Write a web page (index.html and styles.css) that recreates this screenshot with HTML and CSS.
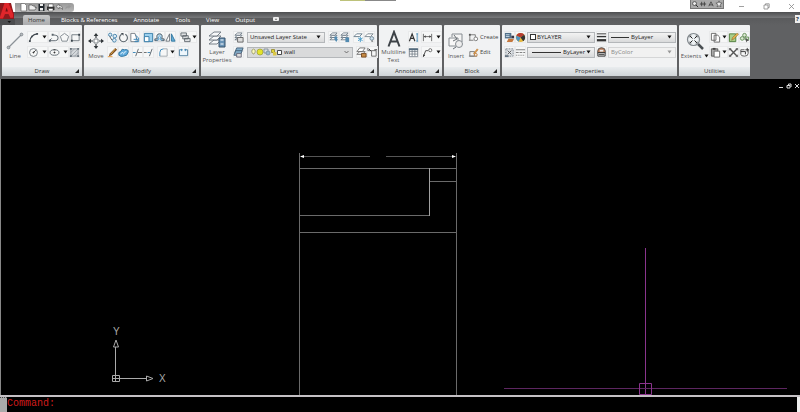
FILE: index.html
```html
<!DOCTYPE html>
<html lang="en">
<head>
<meta charset="utf-8">
<title>Drawing editor</title>
<link rel="stylesheet" href="styles.css">
</head>
<body>
<svg class="defs" aria-hidden="true">
  <symbol id="caret" viewBox="0 0 5 4"><path d="M0.5 0.5h4L2.5 3.5z" fill="#111"/></symbol>
  <symbol id="corner" viewBox="0 0 4 4"><path d="M4 0v4H0z" fill="#222"/></symbol>
  <symbol id="layers" viewBox="0 0 12 12"><g fill="#f8f9fa" stroke="#556472" stroke-width=".8"><path d="M2 8.500l3-2.500h5L7.500 8.500z"/><path d="M2 6l3-2.500h5L7.500 6z"/><path d="M2 3.500L5 1h5L7.500 3.500z"/></g></symbol>
</svg>
<header class="titlebar">
  <button class="app" aria-label="Application menu"><svg viewBox="0 0 15 22"><path d="M0 0h11l3 12v4H0z" fill="#8d1a1e"/><path d="M0 14L4.500 0H9l4.500 11v3.500l-3 .5L8.500 11H5l-2 4.500H0z" fill="#e0262b"/><path d="M6.600 4.500L5.400 8.500h2.500z" fill="#6d1216"/><path d="M9 0l4.500 11v3.500" stroke="#a81419" fill="none"/><path d="M0 16h15v6H0z" fill="#4c4d4f"/><path d="M7.500 18h3.500L9.200 20z" fill="#111"/></svg></button>
  <nav class="quick" aria-label="Quick access">
    <button aria-label="New"><svg viewBox="0 0 9 9"><path d="M2 .500h3.500l2 2v5.500H2z" fill="#fff" stroke="#555" stroke-width=".6"/></svg></button>
    <button aria-label="Open"><svg viewBox="0 0 9 9"><path d="M1 7V2h3l1 1h2v1.500h1.500L7 7z" fill="#eee" stroke="#555" stroke-width=".7"/></svg></button>
    <button aria-label="Save"><svg viewBox="0 0 9 9"><path d="M1.500 1h6v7h-6z" fill="#20262b"/><path d="M3 1h3v2H3zM3 5h3v2.500H3z" fill="#eee"/></svg></button>
    <button aria-label="Print"><svg viewBox="0 0 9 9"><path d="M1 3.500h7.500V7H1z" fill="#333"/><path d="M2.500 1H7v3H2.500zM2.500 5.500H7V8H2.500z" fill="#fff" stroke="#333" stroke-width=".5"/></svg></button>
    <button aria-label="Undo"><svg viewBox="0 0 9 9"><path d="M1 3.500L4 1v1.500q4 0 3.500 4Q6.500 4.500 4 4.500V6z" fill="#ddd" stroke="#555" stroke-width=".6"/></svg></button>
    <button aria-label="Redo"><svg viewBox="0 0 9 9"><path d="M7 3.500L4.500 1.500V3Q1 3 1.500 6.500 2.500 4.500 4.500 4.500v1z" fill="#999"/></svg></button>
  </nav>
  <div class="edge"><i></i><i></i></div>
  <nav class="info" aria-label="Information">
    <button aria-label="Search"><svg viewBox="0 0 9 9"><circle cx="4" cy="4" r="2.200" fill="#eee" stroke="#333" stroke-width=".8"/><path d="M5.500 5.500l2.500 2.500" stroke="#222"/></svg></button>
    <button aria-label="Key"><svg viewBox="0 0 9 9"><path d="M1 4.500h7M3 2v5M6 2v5" stroke="#333" stroke-width=".9"/></svg></button>
    <button aria-label="Communication"><svg viewBox="0 0 9 9"><path d="M2 7l2.500-5L7 7M2.500 5.500h4" stroke="#333" fill="none" stroke-width=".8"/></svg></button>
    <button aria-label="Favourites"><svg viewBox="0 0 9 9"><path d="M4.500 1l1 2.300 2.500.2-2 1.700.7 2.600-2.200-1.500-2.200 1.500.7-2.600-2-1.700 2.500-.2z" fill="#eee" stroke="#333" stroke-width=".6"/></svg></button>
  </nav>
  <div class="window">
    <button aria-label="Minimize"><svg viewBox="0 0 7 7"><path d="M1 3.500h5"/></svg></button>
    <button aria-label="Restore"><svg viewBox="0 0 7 7"><path d="M1 2h4v4H1zM2.500 2V.800h3.700v3.700H5"/></svg></button>
    <button aria-label="Close"><svg viewBox="0 0 7 7"><path d="M1 1l5 5M6 1L1 6"/></svg></button>
  </div>
</header>
<nav class="tabs" aria-label="Ribbon">
  <button class="tab active">Home</button>
  <button class="tab">Blocks &amp; References</button>
  <button class="tab">Annotate</button>
  <button class="tab">Tools</button>
  <button class="tab">View</button>
  <button class="tab">Output</button>
  <button class="toggle" aria-label="Minimize ribbon"><svg viewBox="0 0 6 4"><rect width="6" height="4" rx="1" fill="#eee"/><path d="M2 2.700h2L3 1.200z" fill="#444"/></svg></button>
  <button class="help" aria-label="Help">?</button>
</nav>
<div class="ribbon">
  <section class="panel draw">
    <div class="body">
      <button class="big"><svg viewBox="0 0 18 18"><path d="M2.500 15.500l13-13" stroke="#8b9298" stroke-width="1.200"/><g fill="#b8bdc1" stroke="#737a80" stroke-width=".7"><circle cx="2.500" cy="15.500" r="1.400"/><circle cx="15.500" cy="2.500" r="1.400"/></g></svg><span>Line</span></button>
      <div class="rows">
        <div class="row">
          <button class="tool drop" aria-label="Arc"><svg viewBox="0 0 12 12"><path d="M2 10Q3 3 10 2" fill="none" stroke="#414950" stroke-width="1.200"/><path d="M1 9h2v2H1zM9 1h2v2H9zM3.500 4h1.600v1.600H3.500z" fill="#414950"/></svg><svg class="caret"><use href="#caret"/></svg></button>
          <button class="tool" aria-label="Polyline"><svg viewBox="0 0 12 12"><path d="M1.500 9.500h6.500a2.500 2.500 0 000-6L5 3M1.500 9.500L4 7" fill="none" stroke="#59636b"/><path d="M1 8.500h2v2H1zM4 2h2v2H4z" fill="#59636b"/></svg></button>
          <button class="tool" aria-label="Polygon"><svg viewBox="0 0 12 12"><path d="M6 1.500l4.500 3.300-1.700 5.200H3.200L1.500 4.800z" fill="none" stroke="#7f878d"/></svg></button>
          <button class="tool" aria-label="Rectangle"><svg viewBox="0 0 12 12"><path d="M2 3h8v6.500H2z" fill="none" stroke="#6e777e"/><path d="M9 2h2v2H9zM1 8.500h2v2H1z" fill="#38434b"/></svg></button>
        </div>
        <div class="row">
          <button class="tool drop" aria-label="Circle"><svg viewBox="0 0 12 12"><circle cx="6" cy="6" r="4.300" fill="none" stroke="#727a80"/><path d="M6 6l2.500-2.500M5 6h2M6 5v2" stroke="#333"/></svg><svg class="caret"><use href="#caret"/></svg></button>
          <button class="tool drop" aria-label="Ellipse"><svg viewBox="0 0 12 12"><ellipse cx="6" cy="6" rx="4.800" ry="3" fill="none" stroke="#59636b"/><path d="M5 6h2M6 5v2M5 3h2" stroke="#333"/></svg><svg class="caret"><use href="#caret"/></svg></button>
          <button class="tool" aria-label="Hatch"><svg viewBox="0 0 12 12"><path d="M2 2h8v8H2z" fill="#d5d9dc" stroke="#8b9299"/><path d="M2 6l4-4M2 10l8-8M6 10l4-4" stroke="#7c858d" stroke-width=".6"/><path d="M1 1h2v2H1zM9 1h2v2H9zM1 9h2v2H1zM9 9h2v2H9z" fill="#68717a"/></svg></button>
        </div>
      </div>
    </div>
    <h2>Draw<svg><use href="#corner"/></svg></h2>
  </section>
  <section class="panel modify">
    <div class="body">
      <button class="big"><svg viewBox="0 0 18 18"><path d="M9 2v4M9 12v4M2 9h4M12 9h4" stroke="#33383c" stroke-width="1.200"/><path d="M9 1l2.300 3H6.700zM9 17l2.300-3H6.700zM1 9l3-2.300v4.600zM17 9l-3-2.300v4.600z" fill="#33383c"/><path d="M7 7h4v4H7z" fill="#fff" stroke="#7e8488"/></svg><span>Move</span></button>
      <div class="rows">
        <div class="row">
          <button class="tool" aria-label="Copy"><svg viewBox="0 0 12 12"><g fill="#dcebf5" stroke="#4280a8"><circle cx="3.500" cy="3" r="1.800"/><circle cx="8.500" cy="4.500" r="2"/><circle cx="8" cy="9" r="2"/></g><path d="M3 5l2.500 4" stroke="#555"/></svg></button>
          <button class="tool" aria-label="Rotate"><svg viewBox="0 0 12 12"><path d="M4 2.500a4.300 4.300 0 104 0" fill="none" stroke="#59636b" stroke-width="1.200"/><path d="M3 1h3v3z" fill="#414950"/></svg></button>
          <button class="tool" aria-label="Stretch"><svg viewBox="0 0 12 12"><path d="M2 10.500V1.500h4.500l3 9z" fill="#fff" stroke="#737b82"/><path d="M7 3.500l3.500 3v4H6M5 8h4M7.500 6.500L9 8 7.500 9.500" fill="none" stroke="#3483b7"/></svg></button>
          <button class="tool sep" aria-label="Scale"><svg viewBox="0 0 12 12"><path d="M1.500 1.500h9v9h-9z" fill="#9bd0ee" stroke="#347ba7"/><path d="M1.500 5h5v5.500h-5z" fill="#fff" stroke="#347ba7"/></svg></button>
          <button class="tool" aria-label="Offset"><svg viewBox="0 0 12 12"><path d="M1 9.500h10V7.500H8.500Q10 2 6 2T3.500 7.500H1z" fill="#b9dcf0" stroke="#44535f"/><path d="M4 9.500V8h1.500Q4 4.500 6 4.500T6.500 8H8v1.500" fill="#fff" stroke="#3b89bc" stroke-width=".8"/></svg></button>
          <button class="tool" aria-label="Mirror"><svg viewBox="0 0 12 12"><path d="M5 2v8H1z" fill="#fff" stroke="#6b737a"/><path d="M7 2v8h4z" fill="#66acd7" stroke="#2f769f"/></svg></button>
          <button class="tool drop sep" aria-label="Array"><svg viewBox="0 0 12 12"><g fill="#e0e2e4" stroke="#555d64" stroke-width=".9"><path d="M1 1h6v3.500H1zM3 4h6v3.500H3zM5 7h6v3.500H5z"/></g></svg><svg class="caret"><use href="#caret"/></svg></button>
        </div>
        <div class="row">
          <button class="tool" aria-label="Erase"><svg viewBox="0 0 12 12"><path d="M2 10l1-3 6-6 2 2-6 6z" fill="#7a4d22"/><path d="M4 8l5-6" stroke="#e8b652"/><path d="M1 10.500h5" stroke="#e79838"/></svg></button>
          <button class="tool" aria-label="Explode"><svg viewBox="0 0 12 12"><path d="M1 9Q0 5 3 5 4 1 7 3q5-1 4 3-1 4-5 4Q3 11 1 9z" fill="#5da9db" stroke="#34759e"/><path d="M3 8q0-2 2.500-2M6 8q0-3 3-3" fill="none" stroke="#e9f5fc"/></svg></button>
          <button class="tool sep" aria-label="Trim"><svg viewBox="0 0 12 12"><path d="M1 6h3" stroke="#3483b7"/><path d="M6 6h5" stroke="#666"/><path d="M4 10l3-8" stroke="#59636b"/></svg></button>
          <button class="tool" aria-label="Extend"><svg viewBox="0 0 12 12"><path d="M1 6h3" stroke="#666"/><path d="M5 6h3" stroke="#3483b7"/><path d="M7 10l3-8" stroke="#59636b"/></svg></button>
          <button class="tool drop sep" aria-label="Fillet"><svg viewBox="0 0 12 12"><path d="M2 10V6q0-4 4-4" fill="none" stroke="#3483b7"/><path d="M6 2h4v8H2" fill="none" stroke="#89939a" stroke-width=".8"/></svg><svg class="caret"><use href="#caret"/></svg></button>
          <button class="tool sep" aria-label="Break"><svg viewBox="0 0 12 12"><path d="M5 3H1.500v6.500h9V3H7" fill="#edf6fc" stroke="#497a9a"/><path d="M4 2v2.500M8 2v2.500" stroke="#3483b7"/></svg></button>
        </div>
      </div>
    </div>
    <h2>Modify<svg><use href="#corner"/></svg></h2>
  </section>
  <section class="panel layers">
    <div class="body">
      <button class="big two"><svg viewBox="0 0 18 18"><g fill="#f7f8f9" stroke="#6b757e" stroke-width=".9"><path d="M1 14l5-4h7l-4 4z"/><path d="M1 10l5-4h7l-4 4z"/><path d="M1 6l5-4h7L9 6z"/></g><path d="M11 8h6v9h-6z" fill="#6993b6" stroke="#38536a"/><path d="M12.500 10h3M12.500 14h3" stroke="#fff"/></svg><span>Layer<br>Properties</span></button>
      <div class="rows">
        <div class="row">
          <button class="tool" aria-label="Layer states"><svg viewBox="0 0 12 12"><use href="#layers"/><path d="M5 6h6v5H5z" fill="#ddd" stroke="#666"/></svg></button>
          <div class="combo state"><select aria-label="Layer state"><option>Unsaved Layer State</option></select><svg class="caret"><use href="#caret"/></svg></div>
          <button class="tool" aria-label="Make current"><svg viewBox="0 0 12 12"><use href="#layers"/><path d="M7 5h3v3h1L9 11 7 8z" fill="#528bb1"/></svg></button>
          <button class="tool" aria-label="Previous layer"><svg viewBox="0 0 12 12"><use href="#layers"/><path d="M7 6h4v5H7z" fill="#528bb1"/></svg></button>
          <button class="tool sep" aria-label="Freeze"><svg viewBox="0 0 12 12"><path d="M1 5l3-3h6L7 5z" fill="#fff" stroke="#687d8b"/><path d="M8 5v6M5.500 6.500l5 3M10.500 6.500l-5 3" stroke="#4499c8"/></svg></button>
          <button class="tool" aria-label="Layer off"><svg viewBox="0 0 12 12"><path d="M1 5l3-3h6L7 5z" fill="#fff" stroke="#7d8890"/><circle cx="8.500" cy="7" r="2" fill="#cfe2ef" stroke="#718795"/><path d="M8 10h2" stroke="#555"/></svg></button>
        </div>
        <div class="row">
          <button class="tool" aria-label="Isolate"><svg viewBox="0 0 12 12"><g fill="#84aeca" stroke="#466178"><path d="M4 1h7L9 6H2z"/><path d="M3 4h7L8 9H1z"/></g><path d="M4 7h5v4H4z" fill="#ddd" stroke="#667"/></svg></button>
          <div class="combo current"><svg class="states" viewBox="0 0 32 10"><path d="M3 7Q1 5 2 3q2-2 3 0 1 2-1 4z" fill="#fbf9bd" stroke="#8c8e58" stroke-width=".7"/><circle cx="10" cy="5" r="3" fill="#e4e42b" stroke="#999b31" stroke-width=".7"/><path d="M14 2h4v4h-4z" fill="#d4dce1" stroke="#71808a" stroke-width=".7"/><circle cx="18" cy="6" r="2" fill="#9bbacf" stroke="#718795" stroke-width=".7"/><path d="M21.500 2.500h3v3h-3z" fill="#e1d53b" stroke="#867b1b" stroke-width=".7"/><path d="M23 5h3.500v3.500H23z" fill="#dbc748"/><path d="M27.500 3.500h4v4h-4z" fill="#fff" stroke="#222" stroke-width=".8"/></svg><select aria-label="Layer"><option>wall</option></select><svg class="caret" viewBox="0 0 5 4"><path d="M.500 1l2 2 2-2" stroke="#555" fill="none" stroke-width=".8"/></svg></div>
          <button class="tool" aria-label="Lock"><svg viewBox="0 0 12 12"><path d="M1 5l3-4h6L7 5zM1 8l3-3h6L7 8z" fill="#fff" stroke="#6c6c6c"/><path d="M6 7h5v4H6z" fill="#c58a44" stroke="#774820"/></svg></button>
          <button class="tool" aria-label="Match layer"><svg viewBox="0 0 12 12"><path d="M1 1v3h3M4 4h6v6H5V5" fill="none" stroke="#666"/><path d="M2 2l3 3M8 3h3" stroke="#333"/></svg></button>
        </div>
      </div>
    </div>
    <h2>Layers<svg><use href="#corner"/></svg></h2>
  </section>
  <section class="panel annotation">
    <div class="body">
      <button class="big two"><svg viewBox="0 0 18 18"><path d="M3.500 16.500L9 2l5.500 14.500M5.500 11.500h7" fill="none" stroke="#3d4247" stroke-width="2"/></svg><span>Multiline<br>Text</span></button>
      <div class="rows">
        <div class="row">
          <button class="tool" aria-label="Single line text"><svg viewBox="0 0 12 12"><path d="M1.500 10l3-8 3 8M2.500 7h4" fill="none" stroke="#333" stroke-width="1.300"/><path d="M9 2h2M10 2v8M9 10h2" stroke="#4689b4"/></svg></button>
          <button class="tool drop" aria-label="Dimension"><svg viewBox="0 0 12 12"><path d="M1.500 2v8M10.500 2v8M2 5h8" stroke="#666"/><path d="M2 5l2-1.500v3zM10 5L8 3.500v3z" fill="#444"/></svg><svg class="caret"><use href="#caret"/></svg></button>
        </div>
        <div class="row">
          <button class="tool" aria-label="Table"><svg viewBox="0 0 12 12"><path d="M1.500 2h9v8.500h-9zM1.500 5h9M1.500 7.700h9M4.500 3v7M7.500 3v7" fill="#fff" stroke="#65717b" stroke-width=".8"/><path d="M1 1.500h10v2H1z" fill="#536a7d"/></svg></button>
          <button class="tool drop" aria-label="Leader"><svg viewBox="0 0 12 12"><path d="M1.500 10.500L4 4h3" fill="none" stroke="#444"/><path d="M1 11l.5-3 2 1z" fill="#333"/><circle cx="9" cy="3.500" r="1.700" fill="#fff" stroke="#666"/></svg><svg class="caret"><use href="#caret"/></svg></button>
        </div>
      </div>
    </div>
    <h2>Annotation<svg><use href="#corner"/></svg></h2>
  </section>
  <section class="panel block">
    <div class="body">
      <button class="big"><svg viewBox="0 0 18 18"><path d="M5 5V2h10v8h-2" fill="#f4f4f4" stroke="#868c91"/><path d="M2 6h9v8H2z" fill="#f8f8f8" stroke="#868c91"/><circle cx="12" cy="12" r="3.500" fill="#eee" stroke="#868c91"/><path d="M7 3l3 4-4 2M9 15l-3 2" fill="none" stroke="#686e73"/></svg><span>Insert</span></button>
      <div class="rows">
        <div class="row"><button class="tool text"><svg viewBox="0 0 12 12"><path d="M2 9V3h6v3M1 9h5" fill="none" stroke="#777"/><circle cx="8.500" cy="7.500" r="2" fill="#fff" stroke="#777"/><path d="M1 2h2v2H1z" fill="#555"/></svg>Create</button></div>
        <div class="row"><button class="tool text"><svg viewBox="0 0 12 12"><path d="M2 10V5h5v5zM1 10h9" fill="none" stroke="#777"/><path d="M6 7l4-5 1 1-4 5z" fill="#e5a04b" stroke="#a86822" stroke-width=".5"/><circle cx="8.500" cy="8.500" r="1.500" fill="#eee" stroke="#c27d39"/></svg>Edit</button></div>
      </div>
    </div>
    <h2>Block<svg><use href="#corner"/></svg></h2>
  </section>
  <section class="panel properties">
    <div class="body">
      <div class="rows">
        <div class="row">
          <button class="tool" aria-label="Match properties"><svg viewBox="0 0 12 12"><path d="M1 1h7v6H1z" fill="#506f89"/><path d="M2 3h4M2 5h4" stroke="#cfe0ec"/><path d="M5 7l6 1-2 3H3z" fill="#c5783d"/><path d="M8 4h3v3H8z" fill="#334"/></svg></button>
          <span class="tool"><svg viewBox="0 0 12 12"><circle cx="6" cy="6" r="5" fill="#e6b73c"/><path d="M6 6L1.500 4A5 5 0 0110 3z" fill="#b63c32"/><path d="M6 6l4-3a5 5 0 01-1 7z" fill="#333"/><path d="M6 6L1.500 4A5 5 0 004 10.500z" fill="#4e94bf"/></svg></span>
          <div class="combo half"><i class="swatch"></i><select aria-label="Color"><option>BYLAYER</option></select><svg class="caret"><use href="#caret"/></svg></div>
          <span class="tool"><svg viewBox="0 0 12 12"><path d="M1 2h10" stroke="#333" stroke-width="1"/><path d="M1 5h10" stroke="#333" stroke-width="1.500"/><path d="M1 9h10" stroke="#333" stroke-width="2.500"/></svg></span>
          <div class="combo half"><i class="stroke"></i><select aria-label="Lineweight" class="fit"><option>ByLayer</option></select><svg class="caret push"><use href="#caret"/></svg></div>
        </div>
        <div class="row">
          <button class="tool" aria-label="List"><svg viewBox="0 0 12 12"><path d="M2 2h8v8H2z" fill="#dce0e4" stroke="#7d868d" stroke-dasharray="2 1"/><path d="M4 4l4 4M8 4L4 8" stroke="#555"/><path d="M1 9h4v2H1z" fill="#657381"/></svg></button>
          <span class="tool"><svg viewBox="0 0 12 12"><path d="M1 3h10" stroke="#777"/><path d="M1 6h10" stroke="#777" stroke-dasharray="3 1"/><path d="M1 9h10" stroke="#777" stroke-dasharray="1 1"/></svg></span>
          <div class="combo half"><i class="stroke long"></i><select aria-label="Linetype" class="fit"><option>ByLayer</option></select><svg class="caret push"><use href="#caret"/></svg></div>
          <span class="tool"><svg viewBox="0 0 12 12"><circle cx="6" cy="5" r="4.300" fill="#b87955" stroke="#555"/><path d="M2 6h8v4H2z" fill="#ccc" stroke="#333"/><path d="M4 3h4v2H4z" fill="#eee"/><path d="M3 8h6" stroke="#333"/></svg></span>
          <div class="combo half off"><select aria-label="Plot style" disabled><option>ByColor</option></select><svg class="caret"><use href="#caret"/></svg></div>
        </div>
      </div>
    </div>
    <h2>Properties</h2>
  </section>
  <section class="panel utilities">
    <div class="body">
      <button class="big"><svg viewBox="0 0 18 18"><path d="M12 12l5 5" stroke="#4a4f53" stroke-width="2.500"/><circle cx="7.500" cy="7.500" r="6" fill="#eef2f4" stroke="#7f868b" stroke-width="1.200"/><path d="M4.500 4.500l2 2M10.500 4.500l-2 2M4.500 10.500l2-2M10.500 10.500l-2-2" stroke="#222"/><path d="M3.700 3.700h2l-2 2zM11.300 3.700h-2l2 2zM3.700 11.300h2l-2-2zM11.300 11.300h-2l2-2z" fill="#222"/></svg><span>Extents <svg class="caret"><use href="#caret"/></svg></span></button>
      <div class="rows">
        <div class="row">
          <button class="tool drop" aria-label="Copy clip"><svg viewBox="0 0 12 12"><path d="M1.500 1.500h5V9h-5zM4.500 3.500h4l2 2v5.500h-6z" fill="#fff" stroke="#666"/></svg><svg class="caret"><use href="#caret"/></svg></button>
          <button class="tool" aria-label="Quick select"><svg viewBox="0 0 12 12"><path d="M1.500 2h7v8.500h-7z" fill="#a9cf8a" stroke="#4d7b3a"/><path d="M4 9l1-3 5-5 1.500 1.500-5 5z" fill="#e5b34d" stroke="#75521f" stroke-width=".5"/></svg></button>
          <button class="tool" aria-label="Group"><svg viewBox="0 0 12 12"><g fill="#dbe9d2" stroke="#638c56"><circle cx="6" cy="3.500" r="2"/><circle cx="3.500" cy="7" r="2"/><path d="M6.500 5.500h4v3h-4z"/></g><path d="M7 6l4 3.500-2 .3L8 11.500z" fill="#555"/></svg></button>
        </div>
        <div class="row">
          <button class="tool drop" aria-label="Paste"><svg viewBox="0 0 12 12"><path d="M1.500 2h7v8h-7z" fill="#aaa" stroke="#555"/><path d="M4.500 4.500h6V11h-6z" fill="#fff" stroke="#666"/><path d="M3 1h3v2H3z" fill="#444"/></svg><svg class="caret"><use href="#caret"/></svg></button>
          <button class="tool" aria-label="Purge"><svg viewBox="0 0 12 12"><path d="M2 2l8 8M10 2l-8 8" stroke="#555" stroke-width="1.500"/><path d="M1 1h3L1 4zM11 1H8l3 3zM1 11h3L1 8zM11 11H8l3-3z" fill="#777"/></svg></button>
          <button class="tool" aria-label="Calculator"><svg viewBox="0 0 12 12"><path d="M6 3H2v5q0 2 4 2 4 0 4-3V3" fill="none" stroke="#555"/><path d="M7 3h4M9 1v4M2 5h5v3" stroke="#333" fill="none"/></svg></button>
        </div>
      </div>
    </div>
    <h2>Utilities</h2>
  </section>
</div>
<main class="canvas">
  <div class="document">
    <button aria-label="Minimize drawing"><svg viewBox="0 0 6 6"><path d="M1 4.500h4"/></svg></button>
    <button aria-label="Restore drawing"><svg viewBox="0 0 6 6"><path d="M1 2.500h3V5H1zM2.500 2V1H5v3"/></svg></button>
    <button aria-label="Close drawing"><svg viewBox="0 0 6 6"><path d="M1 1l4 4M5 1L1 5"/></svg></button>
  </div>
  <svg class="plan" viewBox="0 79 800 316" preserveAspectRatio="xMinYMin slice" role="img" aria-label="Floor plan">
    <g fill="none" stroke="#6a6a6a">
      <path d="M299.500 153v242M456.500 153v242M299 168.500h158M299 215.500h130M299 232.500h158M429 181.500h28"/>
      <path d="M302 156.500h68M386 156.500h68" stroke="#555"/>
      <path d="M429.500 168v48" stroke="#a0a0a0"/>
    </g>
    <path d="M300 156.500l4-1.500v3zM456 156.500l-4-1.500v3z" fill="#fff"/>
    <g fill="none" stroke="#aaa">
      <path d="M115.500 378V347M116 378.500h30M112.500 375.500h7v6h-7zM112 378.500h8M115.500 375v7"/>
      <path d="M113.500 347l2.500-7 2.500 7zM146.500 376l6.500 2.500-6.500 2.500z"/>
    </g>
    <g class="axis"><text x="113" y="335">Y</text><text x="159" y="382">X</text></g>
    <g fill="none" stroke="#8a348c">
      <path d="M645.500 248v147"/><path d="M504 388.500h283" stroke="#5d2660"/><path d="M639.500 383.500h12v11h-12z"/>
    </g>
  </svg>
</main>
<footer class="command">
  <div class="grip"></div>
  <label for="command">Command:</label>
  <input id="command" type="text" autocomplete="off">
  <div class="scroll"></div>
</footer>
</body>
</html>
```

FILE: styles.css
```css
* { box-sizing: border-box; }

body {
  margin: 0;
  height: 100vh;
  display: flex;
  flex-direction: column;
  overflow: hidden;
  background: #000;
  color: #444;
  font: 6px/8px "Open Sans", "Noto Sans", sans-serif;
}

button, select, input {
  margin: 0;
  padding: 0;
  border: 0;
  background: none;
  color: inherit;
  font: inherit;
}

svg { display: block; flex: none; }
.defs { position: absolute; width: 0; height: 0; }
.caret { width: 5px; height: 4px; }

.titlebar {
  position: relative;
  display: flex;
  height: 12px;
  background: #fff;
}

.app { position: absolute; left: 0; top: 3px; z-index: 2; }
.app svg { width: 15px; height: 22px; }

.quick {
  display: flex;
  height: 9px;
  margin: 3px 0 0 15px;
  padding: 0 1px 0 4px;
  background: linear-gradient(#999, #b8b8b8);
  border-radius: 0 3px 3px 0;
}
.quick svg { width: 9px; height: 9px; }

.edge { position: absolute; left: 42.5%; display: flex; }
.edge i { width: 25px; height: 1px; background: #bdc27a; }
.edge i + i { width: 31px; background: #888; }

.info {
  display: flex;
  height: 9px;
  margin-left: auto;
  background: #aaa;
  border: 1px solid #777;
  border-top: 0;
}
.info svg { width: 8px; height: 8px; }

.window { display: flex; gap: 18px; align-items: center; margin: 0 5px 0 14px; }
.window svg { width: 7px; height: 7px; fill: none; stroke: #888; stroke-width: 0.8; }

.tabs {
  display: flex;
  align-items: flex-end;
  height: 13px;
  padding-left: 23px;
  background: linear-gradient(#4d4e50, #77787a 45%, #5a5b5d 50%, #606163);
}
.tab { height: 11px; padding: 0 8px; line-height: 10px; color: #fff; white-space: nowrap; }
.tab.active {
  margin-right: 3px;
  padding: 0 5px;
  height: 10px;
  border-radius: 2px 2px 0 0;
  background: linear-gradient(#c6c7c8, #aaabad);
  color: #333;
}
.toggle { align-self: center; margin-left: 10px; }
.toggle svg { width: 6px; height: 4px; }
.help {
  align-self: center;
  margin-left: auto;
  width: 5px;
  overflow: hidden;
  background: #eee;
  color: #234;
  font-weight: bold;
}

.ribbon {
  display: flex;
  gap: 2px;
  padding: 0 0 3px 2px;
  background: #606163;
}

.panel {
  display: flex;
  flex-direction: column;
  flex: none;
  height: 51px;
  background: #f1f2f3;
  border-radius: 1px;
}
.draw { width: 80px; }
.modify { width: 115px; }
.layers { width: 176px; }
.annotation { width: 63px; }
.block { width: 56px; }
.properties { width: 175px; }
.utilities { width: 71px; }

.body { display: flex; flex: 1; padding: 5px 1px 0 2px; }

.panel h2 {
  position: relative;
  margin: 0;
  height: 9px;
  background: linear-gradient(#e9ecee, #d0d5d8);
  font-size: 6px;
  font-weight: 400;
  line-height: 9px;
  text-align: center;
  color: #333;
}
.panel h2 svg { position: absolute; right: 3px; bottom: 3px; width: 4px; height: 4px; }

.big {
  display: flex;
  flex-direction: column;
  align-items: center;
  gap: 2px;
  flex: none;
  width: 22px;
  padding-top: 2px;
  color: #555;
}
.big > svg { width: 18px; height: 18px; }
.big span { display: flex; align-items: center; gap: 3px; white-space: nowrap; }
.big.two { padding-top: 0; gap: 0; }
.big.two span { display: block; }
.modify .big { width: 20px; }
.layers .big { width: 28px; }
.annotation .big { width: 25px; }
.block .big { width: 20px; }
.utilities .big { width: 28px; }

.rows { display: flex; flex-direction: column; gap: 3px; margin-left: auto; padding-top: 1px; }
.row { display: flex; align-items: center; height: 12px; }
.tool {
  display: flex;
  align-items: center;
  justify-content: center;
  flex: none;
  width: 11px;
  height: 12px;
  background: #f6f7f7;
  box-shadow: inset 0 0 0 1px #e9eaeb;
}
.tool svg:first-child { width: 11px; height: 11px; }
.drop { width: 21px; gap: 3px; }
.sep { margin-left: 3px; }
.text { width: 31px; justify-content: flex-start; gap: 1px; background: none; box-shadow: none; }

.layers .rows { margin-left: 2px; }
.modify .rows { margin-left: 1px; }
.modify .drop { width: 18px; gap: 1px; }
.annotation .rows { margin-left: 2px; }
.annotation .drop { margin-left: 2px; }
.utilities .drop { width: 19px; gap: 1px; }

.combo {
  display: flex;
  align-items: center;
  height: 11px;
  padding: 0 3px 0 2px;
  border: 1px solid #b4b7ba;
  background: linear-gradient(#f3f3f3, #d9dadb);
  color: #222;
}
.combo select { appearance: none; flex: 1; min-width: 0; height: 9px; line-height: 9px; opacity: 1; }
.combo .fit { flex: none; }
.push { margin-left: auto; }
.layers .combo { margin: 0 3px; }
.state { width: 78px; }
.current { width: 106px; background: #d9dadb; }
.states { width: 32px; height: 10px; margin-right: 2px; }
.half { width: 68px; margin: 0 1px; }
.half.off { color: #888; background: #f1f1f1; border-color: #d5d6d7; }
.off .caret { opacity: 0.4; }
.swatch { width: 6px; height: 6px; margin-right: 1px; border: 1px solid #333; background: #fff; }
.stroke { width: 18px; height: 1px; margin-right: 2px; background: #333; }
.stroke.long { width: 30px; margin-left: 2px; }

.canvas { position: relative; flex: 1; min-height: 0; border-left: 1px solid #888; }
.plan { position: absolute; left: -1px; top: 0; width: calc(100% + 1px); height: 100%; }
.axis text { fill: #aaa; font: 10px "Liberation Sans", sans-serif; }
.document { position: absolute; right: 0; top: 4px; z-index: 1; display: flex; gap: 2px; }
.document svg { width: 6px; height: 6px; fill: none; stroke: #ddd; }

.command {
  display: flex;
  height: 17px;
  border-top: 2px solid #c4c0c4;
  color: #d01c1c;
  font: 10px/13px "Liberation Mono", monospace;
}
.grip { width: 7px; background: #aaa; border-top: 1px dotted #444; }
.command input { flex: 1; min-width: 0; outline: 0; }
.scroll { width: 3px; background: #eee; }
```
